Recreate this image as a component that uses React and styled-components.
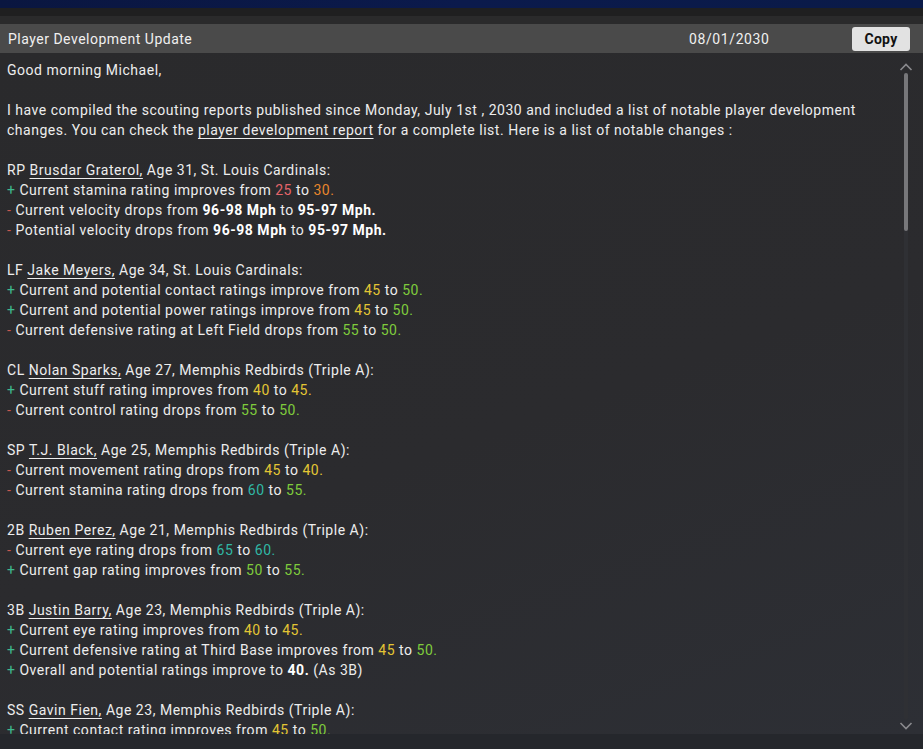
import styled, { createGlobalStyle } from "styled-components";

const GlobalStyle = createGlobalStyle`
    html, body {
        margin: 0;
        padding: 0;
        background: #2b2b2d;
    }
    body {
        font-family: Roboto, "Noto Sans", "Liberation Sans", sans-serif;
    }
`;

const Page = styled.div`
    width: 923px;
    height: 749px;
    display: flex;
    flex-direction: column;
    overflow: hidden;
`;

const NavBand = styled.div`
    height: 8px;
    background: linear-gradient(90deg, #0a1640 0%, #0b1a4c 50%, #0a1a48 100%);
`;

const Strip = styled.div`
    height: 8px;
    background: ${(p) => p.$color};
`;

const Header = styled.div`
    height: 29px;
    background: #4a4a4a;
    display: flex;
    align-items: center;
    padding: 0 13px 0 8px;
    color: #f0f0f0;
    font-size: 14px;
    letter-spacing: 0.5px;
`;

const Title = styled.div`
    flex: 1;
`;

const DateText = styled.div`
    width: 84px;
    margin-right: 79px;
    font-size: 14px;
    letter-spacing: 0.6px;
`;

const CopyButton = styled.button`
    width: 58px;
    height: 24px;
    border: none;
    border-radius: 3px;
    background: #e2e2e2;
    color: #111;
    font-family: Roboto, "Liberation Sans", sans-serif;
    font-size: 14px;
    font-weight: bold;
    letter-spacing: 0.3px;
    padding: 0;
`;

const Body = styled.div`
    height: 681px;
    display: flex;
    background: linear-gradient(160deg, #2a2a2c 0%, #2b2b2e 55%, #2d2f35 100%);
`;

const Content = styled.div`
    flex: 1;
    overflow: hidden;
    padding: 7px 0 0 7px;
    color: #ededed;
    font-size: 14px;
    line-height: 20px;
    letter-spacing: 0.52px;
`;

const Para = styled.div`
    margin-bottom: 20px;
`;

const Line = styled.div`
    white-space: nowrap;
`;

const Link = styled.span`
    text-decoration: underline;
    text-underline-offset: 3px;
    text-decoration-thickness: 1px;
`;

const Sign = styled.span`
    color: ${(p) => (p.$up ? "#3fb98e" : "#c8584f")};
`;

const Num = styled.span`
    color: ${(p) => p.$color};
`;

const Strong = styled.b`
    color: #ffffff;
`;

const ScrollCol = styled.div`
    width: 24px;
    display: flex;
    flex-direction: column;
    align-items: center;
    padding: 10px 0 4px;
    margin-right: 5px;
`;

const Track = styled.div`
    flex: 1;
    width: 4px;
    margin: 2px 0;
    border-radius: 2px;
    background: #2f3034;
    display: flex;
    flex-direction: column;
`;

const Thumb = styled.div`
    height: 158px;
    border-radius: 2px;
    background: #77777a;
`;

const Footer = styled.div`
    height: 15px;
    background: #25272c;
`;

const C = {
    red: "#e5646a",
    orange: "#e8862c",
    yellow: "#e3c634",
    green: "#7fcb3c",
    teal: "#30b8a5",
};

const Chevron = ({ up }) => (
    <svg width="14" height="8" viewBox="0 0 14 8">
        <path
            d={up ? "M1.5 7 L7 1.5 L12.5 7" : "M1.5 1 L7 6.5 L12.5 1"}
            fill="none"
            stroke="#8a8a8e"
            strokeWidth="1.6"
        />
    </svg>
);

const players = [
    {
        pos: "RP", name: "Brusdar Graterol,", rest: " Age 31, St. Louis Cardinals:",
        lines: [
            { up: true, text: "Current stamina rating improves from ", a: ["25", C.red], b: ["30.", C.orange] },
            { up: false, text: "Current velocity drops from ", bold: ["96-98 Mph", "95-97 Mph."] },
            { up: false, text: "Potential velocity drops from ", bold: ["96-98 Mph", "95-97 Mph."] },
        ],
    },
    {
        pos: "LF", name: "Jake Meyers,", rest: " Age 34, St. Louis Cardinals:",
        lines: [
            { up: true, text: "Current and potential contact ratings improve from ", a: ["45", C.yellow], b: ["50.", C.green] },
            { up: true, text: "Current and potential power ratings improve from ", a: ["45", C.yellow], b: ["50.", C.green] },
            { up: false, text: "Current defensive rating at Left Field drops from ", a: ["55", C.green], b: ["50.", C.green] },
        ],
    },
    {
        pos: "CL", name: "Nolan Sparks,", rest: " Age 27, Memphis Redbirds (Triple A):",
        lines: [
            { up: true, text: "Current stuff rating improves from ", a: ["40", C.yellow], b: ["45.", C.yellow] },
            { up: false, text: "Current control rating drops from ", a: ["55", C.green], b: ["50.", C.green] },
        ],
    },
    {
        pos: "SP", name: "T.J. Black,", rest: " Age 25, Memphis Redbirds (Triple A):",
        lines: [
            { up: false, text: "Current movement rating drops from ", a: ["45", C.yellow], b: ["40.", C.yellow] },
            { up: false, text: "Current stamina rating drops from ", a: ["60", C.teal], b: ["55.", C.green] },
        ],
    },
    {
        pos: "2B", name: "Ruben Perez,", rest: " Age 21, Memphis Redbirds (Triple A):",
        lines: [
            { up: false, text: "Current eye rating drops from ", a: ["65", C.teal], b: ["60.", C.teal] },
            { up: true, text: "Current gap rating improves from ", a: ["50", C.green], b: ["55.", C.green] },
        ],
    },
    {
        pos: "3B", name: "Justin Barry,", rest: " Age 23, Memphis Redbirds (Triple A):",
        lines: [
            { up: true, text: "Current eye rating improves from ", a: ["40", C.yellow], b: ["45.", C.yellow] },
            { up: true, text: "Current defensive rating at Third Base improves from ", a: ["45", C.yellow], b: ["50.", C.green] },
            { up: true, text: "Overall and potential ratings improve to ", single: "40.", tail: " (As 3B)" },
        ],
    },
    {
        pos: "SS", name: "Gavin Fien,", rest: " Age 23, Memphis Redbirds (Triple A):",
        lines: [
            { up: true, text: "Current contact rating improves from ", a: ["45", C.yellow], b: ["50.", C.green] },
        ],
    },
];

function ChangeLine({ item }) {
    return (
        <Line>
            <Sign $up={item.up}>{item.up ? "+ " : "- "}</Sign>
            {item.text}
            {item.a && (
                <>
                    <Num $color={item.a[1]}>{item.a[0]}</Num> to <Num $color={item.b[1]}>{item.b[0]}</Num>
                </>
            )}
            {item.bold && (
                <>
                    <Strong>{item.bold[0]}</Strong> to <Strong>{item.bold[1]}</Strong>
                </>
            )}
            {item.single && <Strong>{item.single}</Strong>}
            {item.tail}
        </Line>
    );
}

function App() {
    return (
        <Page>
            <GlobalStyle />
            <NavBand />
            <Strip $color="#1f1f20" />
            <Strip $color="#2a2a2b" />
            <Header>
                <Title>Player Development Update</Title>
                <DateText>08/01/2030</DateText>
                <CopyButton>Copy</CopyButton>
            </Header>
            <Body>
                <Content>
                    <Para>Good morning Michael,</Para>
                    <Para>
                        I have compiled the scouting reports published since Monday, July 1st , 2030 and included a list of notable player development
                        <br />
                        changes. You can check the <Link>player development report</Link> for a complete list. Here is a list of notable changes :
                    </Para>
                    {players.map((p) => (
                        <Para key={p.name}>
                            <Line>
                                {p.pos} <Link>{p.name}</Link>
                                {p.rest}
                            </Line>
                            {p.lines.map((l, i) => (
                                <ChangeLine key={i} item={l} />
                            ))}
                        </Para>
                    ))}
                </Content>
                <ScrollCol>
                    <Chevron up />
                    <Track>
                        <Thumb />
                    </Track>
                    <Chevron />
                </ScrollCol>
            </Body>
            <Footer />
        </Page>
    );
}

export default App;
